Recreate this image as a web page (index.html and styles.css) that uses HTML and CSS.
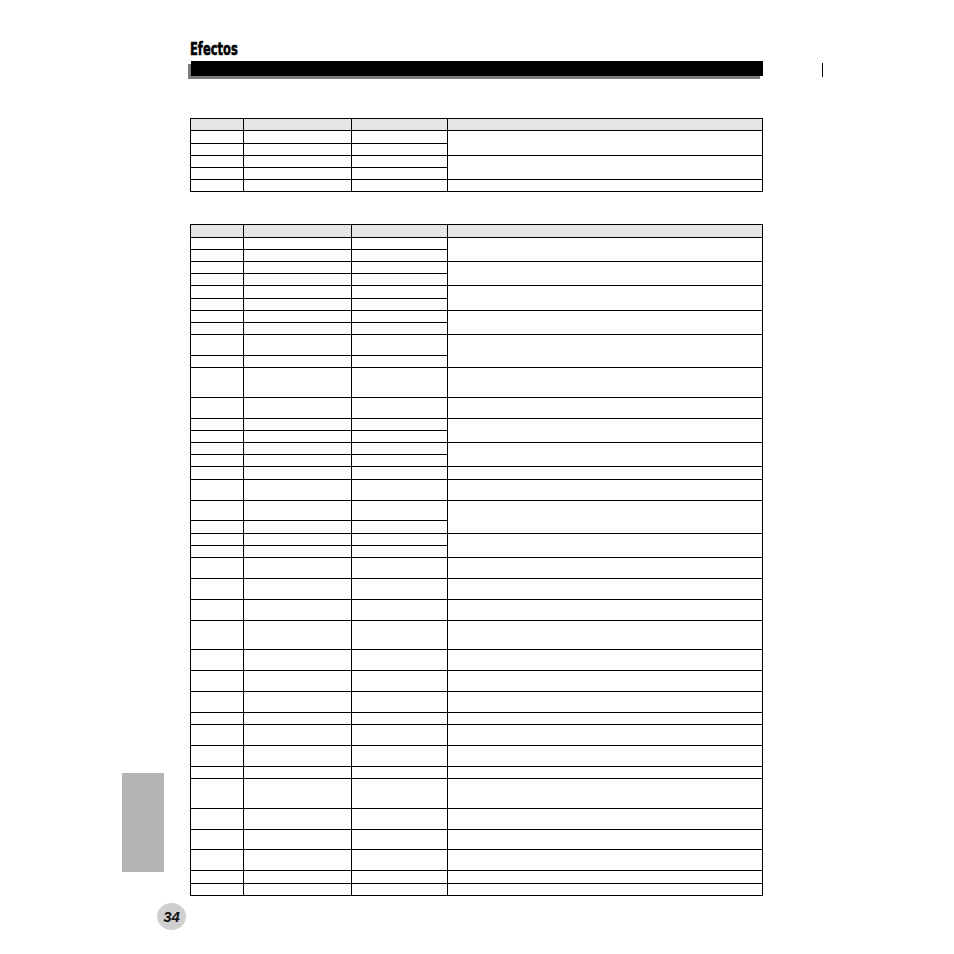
FILE: index.html
```html
<!DOCTYPE html>
<html lang="es">
<head>
<meta charset="utf-8">
<title>Efectos</title>
<link rel="stylesheet" href="styles.css">
</head>
<body>
<div class="page">
  <aside class="side">
    <div class="tab"></div>
    <div class="pagenum">34</div>
  </aside>
  <main class="main">
    <h1 class="title"><span>Efectos</span></h1>
    <div class="bar"></div>
    <div class="tbl t1">
      <div class="c h"></div><div class="c h"></div><div class="c h"></div><div class="c h"></div>
      <div class="c"></div><div class="c"></div><div class="c"></div><div class="c s2"></div>
      <div class="c"></div><div class="c"></div><div class="c"></div>
      <div class="c"></div><div class="c"></div><div class="c"></div><div class="c s2"></div>
      <div class="c"></div><div class="c"></div><div class="c"></div>
      <div class="c"></div><div class="c"></div><div class="c"></div><div class="c"></div>
    </div>
    <div class="tbl t2">
      <div class="c h"></div><div class="c h"></div><div class="c h"></div><div class="c h"></div>
      <!-- r1-r2 -->
      <div class="c"></div><div class="c"></div><div class="c"></div><div class="c s2"></div>
      <div class="c"></div><div class="c"></div><div class="c"></div>
      <!-- r3-r4 -->
      <div class="c"></div><div class="c"></div><div class="c"></div><div class="c s2"></div>
      <div class="c"></div><div class="c"></div><div class="c"></div>
      <!-- r5-r6 -->
      <div class="c"></div><div class="c"></div><div class="c"></div><div class="c s2"></div>
      <div class="c"></div><div class="c"></div><div class="c"></div>
      <!-- r7-r8 -->
      <div class="c"></div><div class="c"></div><div class="c"></div><div class="c s2"></div>
      <div class="c"></div><div class="c"></div><div class="c"></div>
      <!-- r9-r10 -->
      <div class="c"></div><div class="c"></div><div class="c"></div><div class="c s2"></div>
      <div class="c"></div><div class="c"></div><div class="c"></div>
      <!-- r11 -->
      <div class="c"></div><div class="c"></div><div class="c"></div><div class="c"></div>
      <!-- r12 -->
      <div class="c"></div><div class="c"></div><div class="c"></div><div class="c"></div>
      <!-- r13-r14 -->
      <div class="c"></div><div class="c"></div><div class="c"></div><div class="c s2"></div>
      <div class="c"></div><div class="c"></div><div class="c"></div>
      <!-- r15-r16 -->
      <div class="c"></div><div class="c"></div><div class="c"></div><div class="c s2"></div>
      <div class="c"></div><div class="c"></div><div class="c"></div>
      <!-- r17 -->
      <div class="c"></div><div class="c"></div><div class="c"></div><div class="c"></div>
      <!-- r18 -->
      <div class="c"></div><div class="c"></div><div class="c"></div><div class="c"></div>
      <!-- r19-r20 -->
      <div class="c"></div><div class="c"></div><div class="c"></div><div class="c s2"></div>
      <div class="c"></div><div class="c"></div><div class="c"></div>
      <!-- r21-r22 -->
      <div class="c"></div><div class="c"></div><div class="c"></div><div class="c s2"></div>
      <div class="c"></div><div class="c"></div><div class="c"></div>
      <!-- r23-r39 single -->
      <div class="c"></div><div class="c"></div><div class="c"></div><div class="c"></div>
      <div class="c"></div><div class="c"></div><div class="c"></div><div class="c"></div>
      <div class="c"></div><div class="c"></div><div class="c"></div><div class="c"></div>
      <div class="c"></div><div class="c"></div><div class="c"></div><div class="c"></div>
      <div class="c"></div><div class="c"></div><div class="c"></div><div class="c"></div>
      <div class="c"></div><div class="c"></div><div class="c"></div><div class="c"></div>
      <div class="c"></div><div class="c"></div><div class="c"></div><div class="c"></div>
      <div class="c"></div><div class="c"></div><div class="c"></div><div class="c"></div>
      <div class="c"></div><div class="c"></div><div class="c"></div><div class="c"></div>
      <div class="c"></div><div class="c"></div><div class="c"></div><div class="c"></div>
      <div class="c"></div><div class="c"></div><div class="c"></div><div class="c"></div>
      <div class="c"></div><div class="c"></div><div class="c"></div><div class="c"></div>
      <div class="c"></div><div class="c"></div><div class="c"></div><div class="c"></div>
      <div class="c"></div><div class="c"></div><div class="c"></div><div class="c"></div>
      <div class="c"></div><div class="c"></div><div class="c"></div><div class="c"></div>
      <div class="c"></div><div class="c"></div><div class="c"></div><div class="c"></div>
      <div class="c"></div><div class="c"></div><div class="c"></div><div class="c"></div>
    </div>
  </main>
  <div class="right">
    <div class="tick"></div>
  </div>
</div>
</body>
</html>
```

FILE: styles.css
```css
html, body {
  margin: 0;
  padding: 0;
  background: #ffffff;
}

body {
  font-family: "Liberation Sans", Arial, sans-serif;
  color: #000;
}

.page {
  display: grid;
  grid-template-columns: 190px 573px 1fr;
  width: 954px;
  min-height: 954px;
}

.side {
  display: flex;
  flex-direction: column;
  align-items: flex-start;
}

.tab {
  margin-top: 773px;
  margin-left: 122px;
  width: 42px;
  height: 99px;
  background: #b3b3b3;
}

.pagenum {
  margin-top: 31px;
  margin-left: 157px;
  width: 29px;
  height: 27px;
  border-radius: 50%;
  background: #cfcfcf;
  display: flex;
  align-items: center;
  justify-content: center;
  font-family: "Liberation Sans", Arial, sans-serif;
  font-weight: bold;
  font-style: italic;
  font-size: 15px;
  line-height: 1;
  color: #111;
}

.main {
  display: flex;
  flex-direction: column;
}

.title {
  margin: 39px 0 0 0;
  height: 20px;
  line-height: 20px;
  font-size: 18px;
  font-family: "DejaVu Sans", sans-serif;
  font-weight: bold;
  white-space: nowrap;
}

.title span {
  display: inline-block;
  transform: scaleX(0.64);
  transform-origin: left center;
  -webkit-text-stroke: 0.6px #000;
}

.bar {
  margin-top: 2px;
  margin-left: 1px;
  width: 572px;
  height: 15px;
  background: #000;
  box-shadow: -3px 3px 0 #7a7a7a;
}

.tbl {
  display: grid;
  grid-template-columns: 52px 107px 95px 314px;
  gap: 1px;
  background: #000;
  border: 1px solid #000;
  width: 571px;
}

.t1 {
  margin-top: 42px;
  grid-template-rows: 11px 12px 11px 11px 11px 11px;
}

.t2 {
  margin-top: 32px;
  grid-template-rows:
    12px
    11px 11px 11px 11px 12px 11px 11px 11px 20px 11px
    29px 20px 11px 11px 11px 11px 12px 20px 19px 12px
    11px 11px 20px 20px 20px 28px 20px 20px 20px 11px
    20px 20px 11px 29px 20px 19px 20px 12px 11px;
}

.c {
  background: #fff;
}

.c.h {
  background: #e5e5e5;
}

.c.s2 {
  grid-row: span 2;
}

.right {
  display: flex;
  flex-direction: column;
}

.tick {
  margin-top: 63px;
  margin-left: 59px;
  width: 1px;
  height: 14px;
  background: #000;
}
```
